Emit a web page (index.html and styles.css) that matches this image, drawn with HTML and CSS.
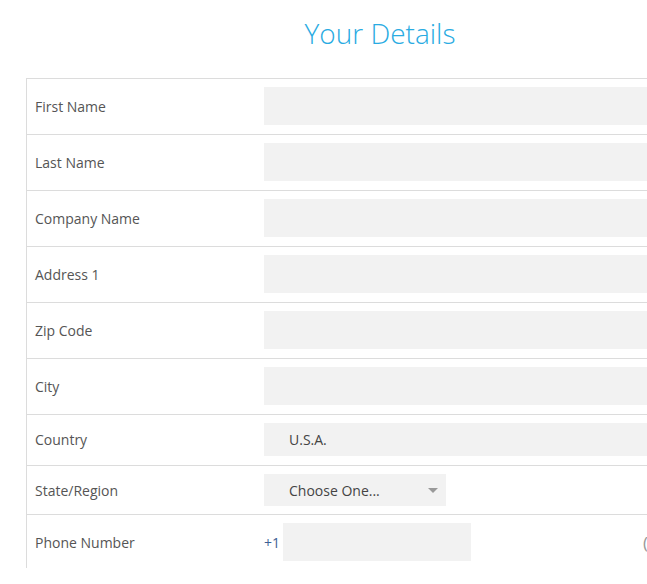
FILE: index.html
```html
<!DOCTYPE html>
<html>
<head>
<meta charset="utf-8">
<link rel="stylesheet" href="styles.css">
</head>
<body>
<div class="page">
  <div class="inner">
    <h1 class="title">Your Details</h1>
    <div class="form">
      <div class="row"><div class="label">First Name</div><div class="field"><div class="input"></div></div></div>
      <div class="row"><div class="label">Last Name</div><div class="field"><div class="input"></div></div></div>
      <div class="row"><div class="label">Company Name</div><div class="field"><div class="input"></div></div></div>
      <div class="row"><div class="label">Address 1</div><div class="field"><div class="input"></div></div></div>
      <div class="row"><div class="label">Zip Code</div><div class="field"><div class="input"></div></div></div>
      <div class="row"><div class="label">City</div><div class="field"><div class="input"></div></div></div>
      <div class="row row-country"><div class="label">Country</div><div class="field"><div class="select select-wide">U.S.A.</div></div></div>
      <div class="row row-state"><div class="label">State/Region</div><div class="field"><div class="select select-small">Choose One...<span class="arrow"></span></div></div></div>
      <div class="row row-last"><div class="label">Phone Number</div><div class="field phone"><span class="prefix">+1</span><div class="input input-phone"></div><span class="hint">(</span></div></div>
    </div>
  </div>
</div>
</body>
</html>
```
FILE: styles.css
```css
html, body {
  margin: 0;
  padding: 0;
  background: #fff;
  overflow: hidden;
}
body {
  font-family: "Open Sans", "Liberation Sans", sans-serif;
  width: 647px;
  height: 584px;
}
.page {
  margin-left: 26px;
  width: 621px;
  height: 568px;
  overflow: hidden;
}
.inner {
  width: 708px;
}
.title {
  margin: 0;
  padding-top: 14px;
  height: 78px;
  box-sizing: border-box;
  text-align: center;
  font-weight: 300;
  font-size: 28px;
  line-height: 38px;
  color: #29abe2;
}
.form {
  border-top: 1px solid #dcdcdc;
  border-left: 1px solid #dcdcdc;
}
.row {
  display: flex;
  align-items: center;
  border-bottom: 1px solid #dcdcdc;
  padding: 8px 0 9px;
}
.row-country { padding: 8px 0 9px; }
.row-state { padding: 8px 0 8px; }
.row-last { border-bottom: none; }
.label {
  width: 229px;
  padding-left: 8px;
  font-size: 14px;
  color: #555;
}
.field {
  flex: 1;
  display: flex;
  align-items: center;
}
.input {
  height: 38px;
  flex: 1;
  background: #f2f2f2;
}
.select {
  background: #f2f2f2;
  box-sizing: border-box;
  padding-left: 25px;
  font-size: 14px;
  color: #444;
  display: flex;
  align-items: center;
  position: relative;
}
.select-wide {
  flex: 1;
  height: 33px;
}
.select-small {
  width: 182px;
  height: 32px;
}
.arrow {
  position: absolute;
  left: 164px;
  top: 14px;
  width: 0;
  height: 0;
  border-left: 5px solid transparent;
  border-right: 5px solid transparent;
  border-top: 5px solid #999;
}
.phone { position: relative; }
.prefix {
  font-size: 14px;
  color: #3d5f94;
  width: 19px;
}
.input-phone {
  flex: 0 0 188px;
}
.hint {
  position: absolute;
  left: 379px;
  top: 8px;
  font-size: 17px;
  color: #999;
}
```
